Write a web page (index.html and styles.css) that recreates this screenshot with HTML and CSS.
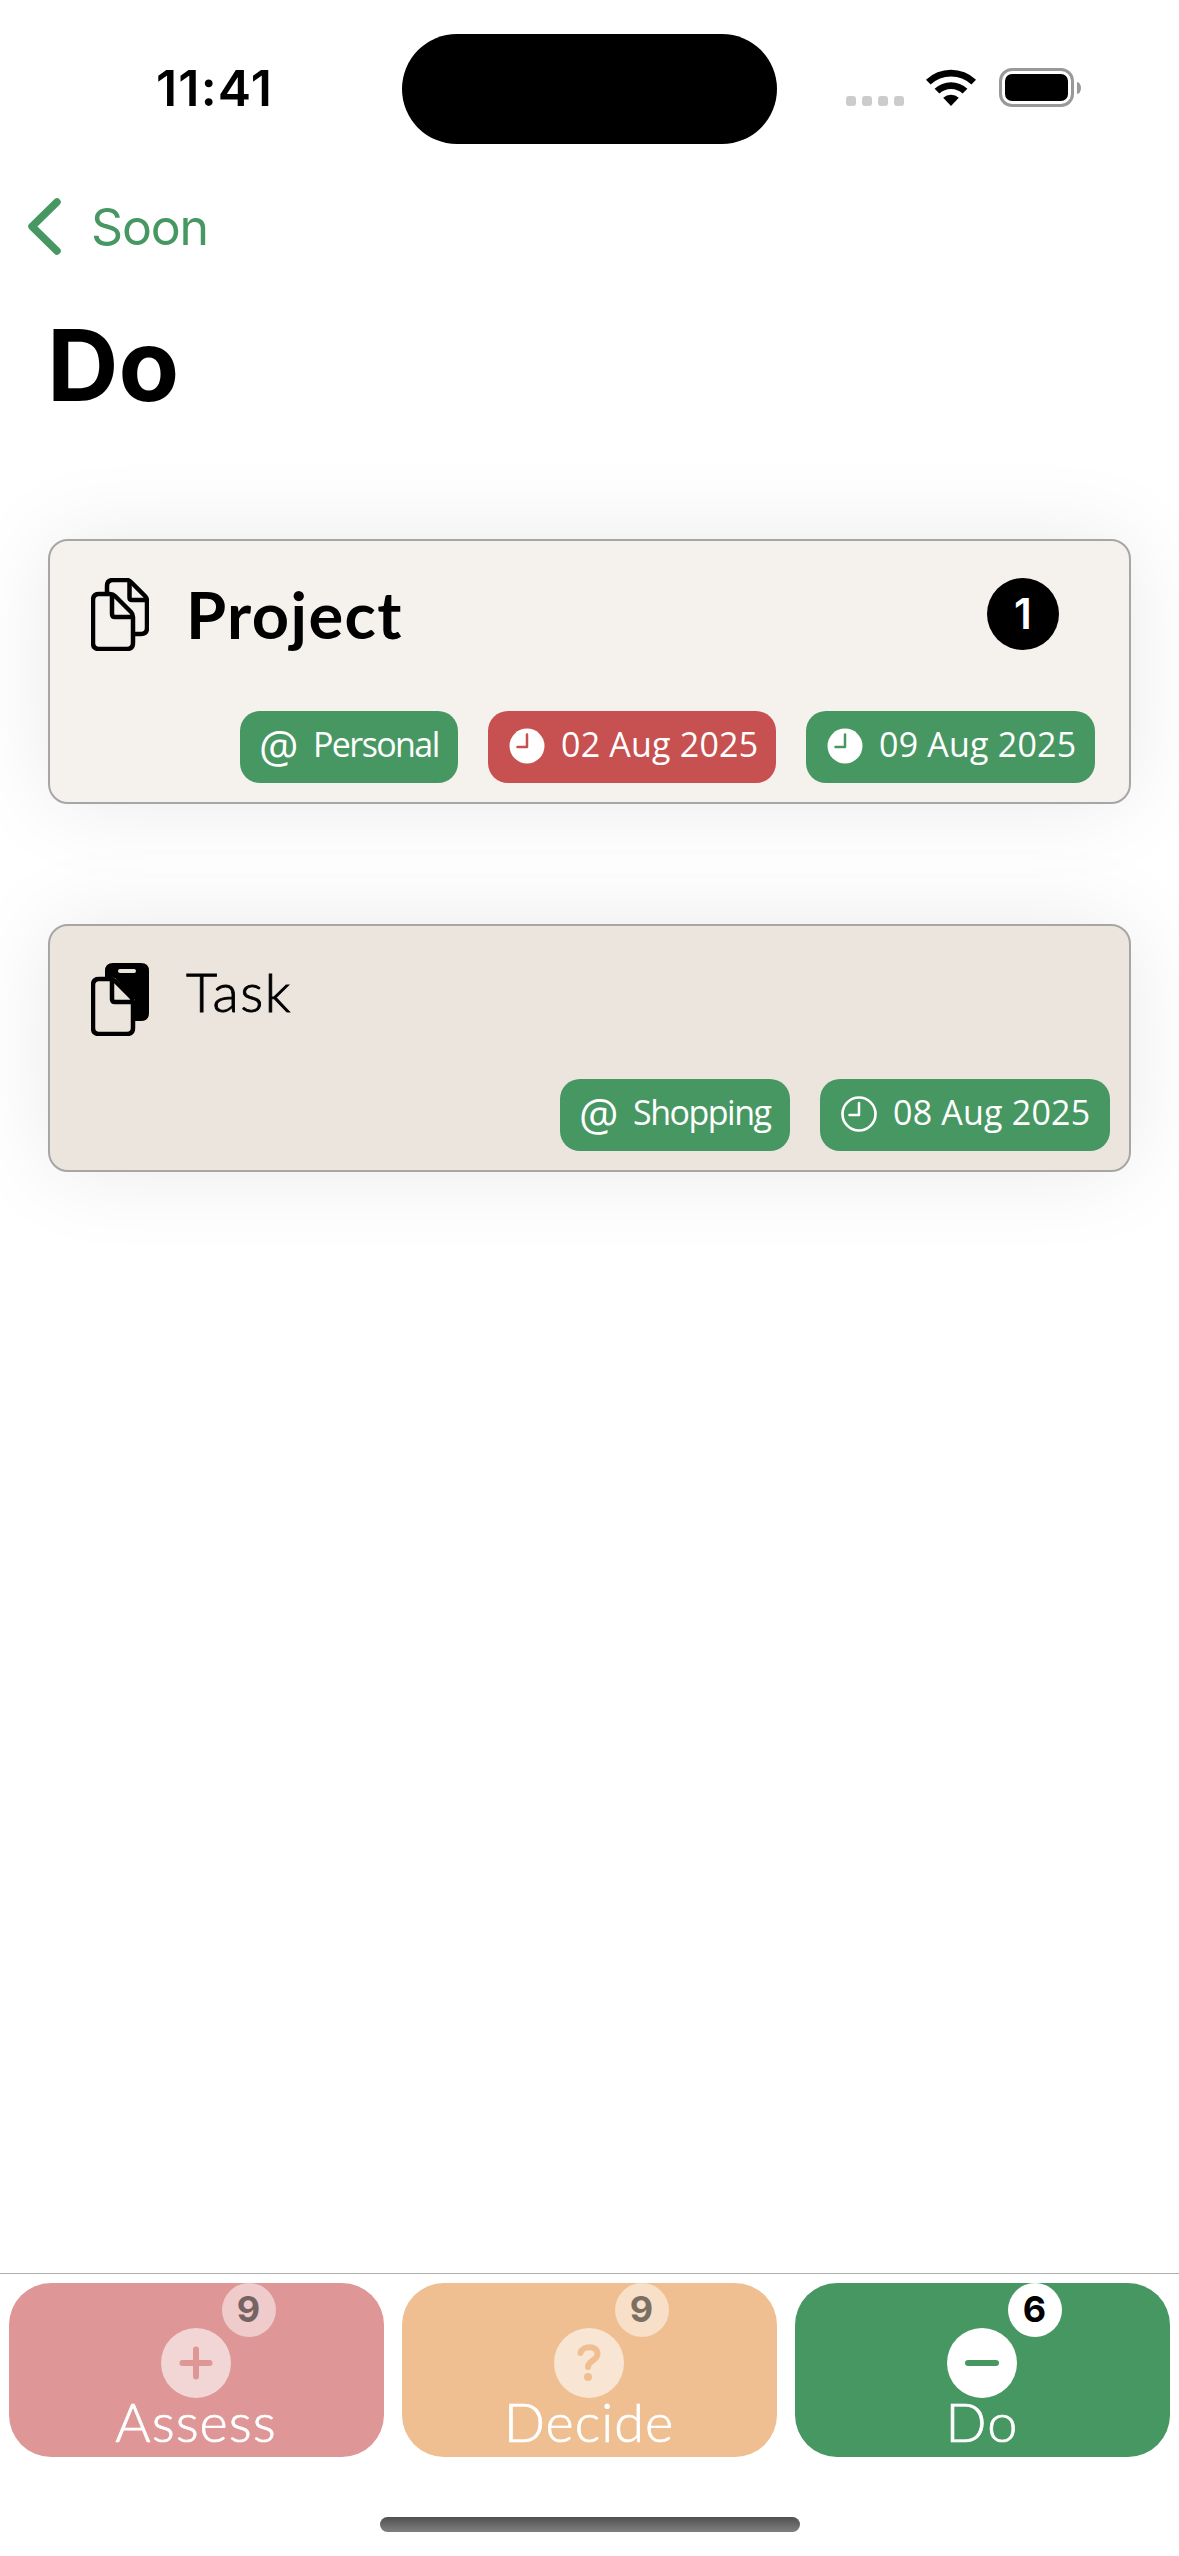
FILE: index.html
```html
<!DOCTYPE html>
<html lang="en">
<head>
<meta charset="utf-8">
<title>Do</title>
<link rel="stylesheet" href="styles.css">
</head>
<body>
<div class="screen">
  <header class="status">
    <div class="time">11:41</div>
    <div class="island"></div>
    <div class="indicators">
      <div class="dots"><i></i><i></i><i></i><i></i></div>
      <svg class="wifi" width="50" height="37" viewBox="0 0 50 37">
        <path d="M0 10.8 A36 36 0 0 1 50 10.8 L45.4 15.6 A29.5 29.5 0 0 0 4.6 15.6 Z"/>
        <path d="M8.6 19.8 A24 24 0 0 1 41.4 19.8 L36.6 24.6 A17 17 0 0 0 13.4 24.6 Z"/>
        <path d="M17.2 28.8 A11.5 11.5 0 0 1 32.8 28.8 L25 37 Z"/>
      </svg>
      <div class="battery"><div class="shell"><div class="charge"></div></div><div class="nub"></div></div>
    </div>
  </header>

  <nav class="back">
    <svg width="33" height="57" viewBox="0 0 33 57"><path d="M29 4 L4 28.5 L29 53"/></svg>
    <span class="back-label">Soon</span>
  </nav>
  <h1 class="title">Do</h1>

  <main class="list">
    <article class="card project">
      <div class="head">
        <svg class="docs" width="58" height="73" viewBox="0 0 58 73">
          <path d="M16 14 V8 Q16 2 22 2 H36 Q38 2 40 4 L54 18 Q56 20 56 23 V50 Q56 56 50 56 H44"/>
          <path d="M38.500 3 V19.500 Q38.500 22 41 22 H55"/>
          <path d="M2 22 Q2 16 8 16 H19 Q22 16 24 18 L40 34 Q42 36 42 39 V65 Q42 71 36 71 H8 Q2 71 2 65 Z"/>
          <path d="M21 17 V36 Q21 39 24 39 H41"/>
        </svg>
        <h2 class="name">Project</h2>
        <div class="count">1</div>
      </div>
      <div class="tags">
        <div class="tag person"><span class="at">@</span><span>Personal</span></div>
        <div class="tag late">
          <svg class="clock" width="36" height="36" viewBox="0 0 36 36"><circle class="face" cx="18" cy="18" r="17.500"/><path d="M18 6.500 V19 H8.500"/></svg>
          <span>02 Aug 2025</span>
        </div>
        <div class="tag">
          <svg class="clock" width="36" height="36" viewBox="0 0 36 36"><circle class="face" cx="18" cy="18" r="17.500"/><path d="M18 6.500 V19 H8.500"/></svg>
          <span>09 Aug 2025</span>
        </div>
      </div>
    </article>

    <article class="card task">
      <div class="head">
        <svg class="docs" width="58" height="73" viewBox="0 0 58 73">
          <path class="solid" d="M14 14 V8 Q14 0 22 0 H50 Q58 0 58 8 V50 Q58 58 50 58 H44 V37 L24 15 Z"/>
          <rect class="slot" x="27" y="6" width="18" height="4" rx="2"/>
          <path class="page" d="M2 22 Q2 16 8 16 H19 Q22 16 24 18 L40 34 Q42 36 42 39 V65 Q42 71 36 71 H8 Q2 71 2 65 Z"/>
          <path d="M21 17 V36 Q21 39 24 39 H41"/>
        </svg>
        <h2 class="name">Task</h2>
      </div>
      <div class="tags">
        <div class="tag shop"><span class="at">@</span><span>Shopping</span></div>
        <div class="tag">
          <svg class="clock open" width="36" height="36" viewBox="0 0 36 36"><circle class="face" cx="18" cy="18" r="16.500"/><path d="M18 7 V19 H8.500"/></svg>
          <span>08 Aug 2025</span>
        </div>
      </div>
    </article>
  </main>

  <footer class="tabbar">
    <div class="tabs">
      <div class="tab assess">
        <div class="badge">9</div>
        <svg class="disc" width="70" height="70" viewBox="0 0 70 70"><circle cx="35" cy="35" r="35"/><path d="M35 21.500 V48.500 M21.500 35 H48.500"/></svg>
        <div class="tab-label">Assess</div>
      </div>
      <div class="tab decide">
        <div class="badge">9</div>
        <svg class="disc" width="70" height="70" viewBox="0 0 70 70"><circle cx="35" cy="35" r="35"/><path d="M26.500 25 C28.500 17.500 43.500 17 43.500 26 C43.500 32.500 34 32.500 34 39"/><circle class="point" cx="34" cy="49" r="4"/></svg>
        <div class="tab-label">Decide</div>
      </div>
      <div class="tab do">
        <div class="badge">6</div>
        <svg class="disc" width="70" height="70" viewBox="0 0 70 70"><circle cx="35" cy="35" r="35"/><path d="M21 35 H49"/></svg>
        <div class="tab-label">Do</div>
      </div>
    </div>
    <div class="home"></div>
  </footer>
</div>
</body>
</html>
```
FILE: styles.css
```css
* { box-sizing: border-box; margin: 0; padding: 0; }
body { background: #fff; }
.screen {
  width: 1179px; height: 2556px; overflow: hidden;
  display: flex; flex-direction: column;
  font-family: Inter, "Liberation Sans", sans-serif; color: #000;
}

/* status bar */
.status { height: 177px; padding-top: 33px; display: grid; grid-template-columns: 402px 375px 402px; align-items: start; }
.time { padding: 25px 0 0 156px; font-size: 50px; line-height: 60px; font-weight: 600; letter-spacing: 1.2px; white-space: nowrap; }
.island { height: 110px; margin-top: 1px; border-radius: 55px; background: #000; }
.indicators { display: flex; align-items: flex-start; padding: 35px 0 0 69px; }
.dots { display: flex; gap: 6px; padding-top: 28px; }
.dots i { width: 10px; height: 10px; border-radius: 3px; background: #ccc; }
.wifi { margin: 1px 0 0 22px; }
.battery { display: flex; align-items: center; gap: 3px; margin-left: 23px; }
.shell { width: 75px; height: 39px; border: 3px solid #999; border-radius: 13px; padding: 3px; }
.charge { height: 27px; border-radius: 7px; background: #000; }
.nub { width: 4px; height: 12px; border-radius: 0 4px 4px 0 / 0 6px 6px 0; background: #999; }

/* navigation */
.back { height: 132px; padding: 21px 0 0 28px; display: flex; align-items: flex-start; color: #479763; }
.back path { fill: none; stroke: #479763; stroke-width: 7.5; stroke-linecap: round; stroke-linejoin: round; }
.back-label { margin: -1px 0 0 30px; font-size: 50px; line-height: 60px; letter-spacing: -1.2px; }
.title { height: 230px; padding-left: 47px; font-size: 99px; line-height: 112px; font-weight: 700; }

/* cards */
.list { flex: 1; padding: 0 48px; display: flex; flex-direction: column; gap: 120px; }
.card { border: 2px solid #a6a6a6; border-radius: 20px; box-shadow: 0 0 90px rgba(0, 0, 0, .085); display: flex; flex-direction: column; justify-content: space-between; }
.project { height: 265px; background: #f5f1ec; padding: 37px 34px 19px 41px; }
.task { height: 248px; background: #ece5de; padding: 37px 19px 19px 41px; }
.head { display: flex; align-items: flex-start; }
.docs path { fill: none; stroke: #000; stroke-width: 4.5; stroke-linejoin: round; }
.docs .solid { fill: #000; stroke: none; }
.docs .slot { fill: #ece5de; }
.docs .page { fill: #ece5de; }
.name { margin: -1px 0 0 37px; font-family: Lato, sans-serif; font-size: 65px; line-height: 74px; font-weight: 700; letter-spacing: 1.4px; }
.task .name { font-size: 54px; line-height: 60px; font-weight: 300; letter-spacing: 1.6px; -webkit-text-stroke: .9px #000; }
.count { margin: 0 36px 0 auto; width: 72px; height: 72px; border-radius: 50%; background: #000; color: #fff; font-size: 42px; line-height: 72px; font-weight: 600; text-align: center; }
.tags { display: flex; justify-content: flex-end; gap: 30px; }
.tag { width: 289px; height: 72px; padding-left: 21px; border-radius: 20px; background: #479763; color: #fff; display: flex; align-items: center; gap: 16px; font-family: "Open Sans", sans-serif; font-size: 34px; line-height: 66px; letter-spacing: .2px; white-space: nowrap; }
.tag span { height: 72px; }
.task .tag { width: 290px; }
.tag.person { width: 218px; letter-spacing: -1.6px; }
.task .shop { width: 230px; letter-spacing: -1.5px; }
.late { width: 288px; background: #c75050; --pill: #c75050; }
.tag .at { width: 36px; font-size: 44px; line-height: 69px; letter-spacing: 0; text-indent: -2px; }
.clock { margin-top: -2px; flex: none; }
.clock .face { fill: #fff; }
.clock path { fill: none; stroke: var(--pill, #479763); stroke-width: 2.5; stroke-linecap: round; stroke-linejoin: round; }
.clock.open .face { fill: none; stroke: #fff; stroke-width: 2.6; }
.clock.open path { stroke: #fff; }

/* tab bar */
.tabbar { height: 283px; border-top: 1px solid #adadad; padding-top: 9px; }
.tabs { display: flex; gap: 18px; padding: 0 9px; }
.tab { position: relative; flex: 1; height: 174px; border-radius: 42px; display: flex; flex-direction: column; align-items: center; padding: 45px 1px 0 0; }
.assess { background: #de9696; --tint: #de9696; --disc: #f2d5d5; --pip: #efcbcb; --ink: #776363; }
.decide { background: #efbf91; --tint: #efbf91; --disc: #f9e5d3; --pip: #f7dfc8; --ink: #7b6f63; }
.do { background: #479763; --tint: #479763; --disc: #fff; --pip: #fff; --ink: #000; }
.badge { position: absolute; left: 213px; top: 0; width: 54px; height: 54px; padding-right: 1px; border-radius: 50%; background: var(--pip); color: var(--ink); font-size: 36px; line-height: 53px; font-weight: 700; text-align: center; }
.disc circle { fill: var(--disc); }
.disc path { fill: none; stroke: var(--tint); stroke-width: 6; stroke-linecap: round; }
.disc .point { fill: var(--tint); }
.tab-label { margin-top: -3px; color: #fff; font-family: Lato, sans-serif; font-size: 54px; line-height: 54px; font-weight: 300; letter-spacing: 1px; -webkit-text-stroke: .7px #fff; }
.home { width: 420px; height: 15px; margin: 60px auto 0; border-radius: 8px; background: linear-gradient(#505050, #808080); }
```
